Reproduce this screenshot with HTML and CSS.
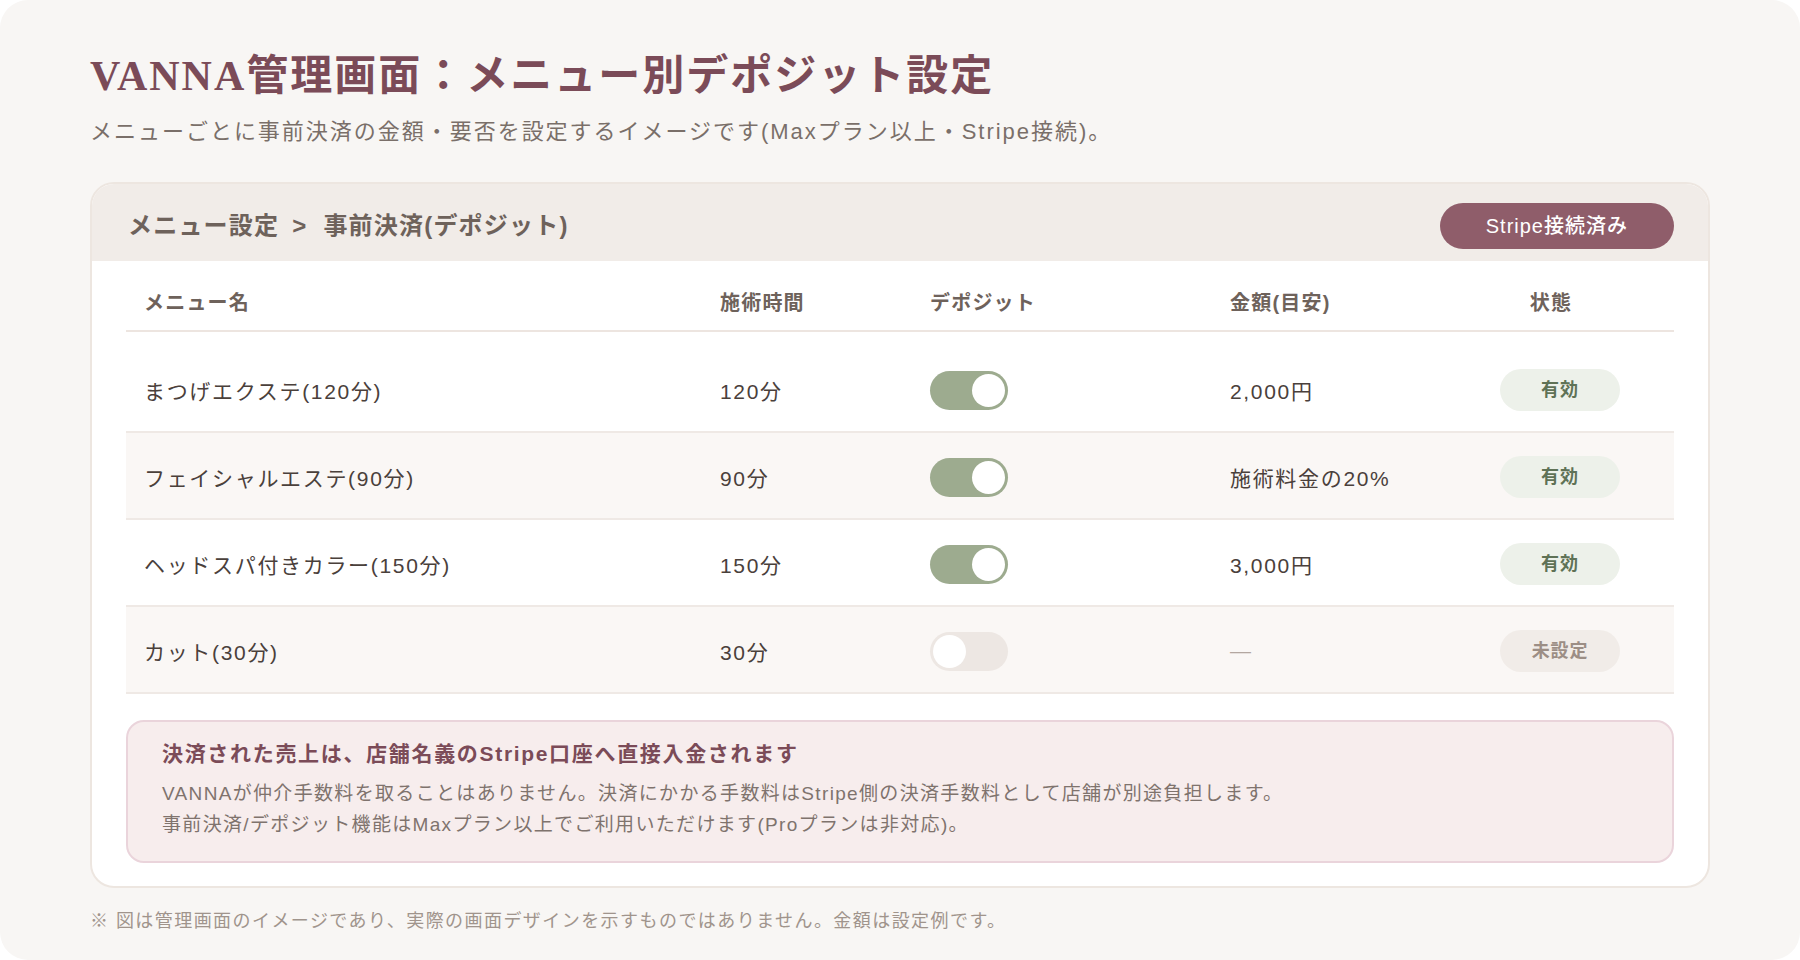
FILE: index.html
```html
<!DOCTYPE html>
<html lang="ja">
<head>
<meta charset="utf-8">
<title>VANNA管理画面：メニュー別デポジット設定</title>
<link rel="stylesheet" href="styles.css">
</head>
<body>
<div class="page">
  <h1 class="title">VANNA管理画面：メニュー別デポジット設定</h1>
  <p class="lead">メニューごとに事前決済の金額・要否を設定するイメージです(Maxプラン以上・Stripe接続)。</p>

  <div class="card">
    <div class="card-head">
      <div class="crumb">メニュー設定<span class="sep">&gt;</span>事前決済(デポジット)</div>
      <span class="badge">Stripe接続済み</span>
    </div>

    <div class="table">
      <div class="row head">
        <div class="cell">メニュー名</div>
        <div class="cell">施術時間</div>
        <div class="cell">デポジット</div>
        <div class="cell">金額(目安)</div>
        <div class="cell status">状態</div>
      </div>
      <div class="rows">
        <div class="row">
          <div class="cell">まつげエクステ(120分)</div>
          <div class="cell">120分</div>
          <div class="cell"><span class="toggle on"><i></i></span></div>
          <div class="cell">2,000円</div>
          <div class="cell status"><span class="pill ok">有効</span></div>
        </div>
        <div class="row alt">
          <div class="cell">フェイシャルエステ(90分)</div>
          <div class="cell">90分</div>
          <div class="cell"><span class="toggle on"><i></i></span></div>
          <div class="cell">施術料金の20%</div>
          <div class="cell status"><span class="pill ok">有効</span></div>
        </div>
        <div class="row">
          <div class="cell">ヘッドスパ付きカラー(150分)</div>
          <div class="cell">150分</div>
          <div class="cell"><span class="toggle on"><i></i></span></div>
          <div class="cell">3,000円</div>
          <div class="cell status"><span class="pill ok">有効</span></div>
        </div>
        <div class="row alt">
          <div class="cell">カット(30分)</div>
          <div class="cell">30分</div>
          <div class="cell"><span class="toggle"><i></i></span></div>
          <div class="cell dash">—</div>
          <div class="cell status"><span class="pill off">未設定</span></div>
        </div>
      </div>
    </div>

    <div class="note">
      <div class="note-title">決済された売上は、店舗名義のStripe口座へ直接入金されます</div>
      <p>VANNAが仲介手数料を取ることはありません。決済にかかる手数料はStripe側の決済手数料として店舗が別途負担します。</p>
      <p>事前決済/デポジット機能はMaxプラン以上でご利用いただけます(Proプランは非対応)。</p>
    </div>
  </div>

  <p class="foot">※ 図は管理画面のイメージであり、実際の画面デザインを示すものではありません。金額は設定例です。</p>
</div>
</body>
</html>
```

FILE: styles.css
```css
*{margin:0;padding:0;box-sizing:border-box;}
body{background:#fff;font-family:"Liberation Sans","Noto Sans CJK JP",sans-serif;color:#4a403b;}
.page{width:1800px;height:960px;background:#f8f6f4;border-radius:28px;padding:50px 90px 0;}

.title{font-family:"Liberation Serif","Noto Sans CJK JP",serif;font-size:42px;line-height:52px;font-weight:700;color:#7b4b58;letter-spacing:2px;}
.lead{margin-top:15px;font-size:22px;line-height:30px;color:#7a6f69;letter-spacing:0.09em;}

.card{margin-top:35px;background:#fff;border:2px solid #ede6e0;border-radius:24px;overflow:hidden;padding-bottom:23px;}
.card-head{display:flex;justify-content:space-between;align-items:center;background:#f1ece8;padding:19px 34px 12px 36px;}
.crumb{font-size:24px;line-height:32px;font-weight:700;color:#6e625b;letter-spacing:0.05em;}
.crumb .sep{margin:0 16px 0 13px;}
.badge{display:inline-block;height:46px;line-height:46px;padding:0 46px;border-radius:23px;background:#8f5d6a;color:#fff;font-size:20px;font-weight:500;letter-spacing:0.05em;}

.table{margin:0 34px;padding-top:13px;}
.row{display:grid;grid-template-columns:576px 210px 300px 228px 1fr;align-items:center;border-bottom:2px solid #efe9e5;height:87px;padding-top:3px;font-size:21px;letter-spacing:0.08em;}
.row.head{height:58px;padding:0 0 2px;font-size:20px;font-weight:700;color:#6e625b;letter-spacing:0.06em;border-bottom-color:#ede5e0;}
.row.head .status{padding:0 12px 0 0;}
.rows{margin-top:14px;}
.row.alt{background:#faf7f5;}
.cell{padding-left:18px;}
.cell.status{padding-left:6px;text-align:center;}
.cell.dash{color:#b3a7a0;}

.toggle{display:block;width:78px;height:39px;border-radius:20px;background:#ede7e3;padding:3px;}
.toggle i{display:block;width:33px;height:33px;border-radius:50%;background:#fff;}
.toggle.on{background:#9dab8f;}
.toggle.on i{margin-left:39px;}

.pill{display:inline-block;width:120px;height:42px;line-height:42px;border-radius:21px;font-size:18px;font-weight:700;letter-spacing:0.05em;}
.pill.ok{background:#edf1ea;color:#5f7256;}
.pill.off{background:#f1ece8;color:#9c8e85;}

.note{margin:26px 34px 0;background:#f7eded;border:2px solid #ead4db;border-radius:18px;padding:17px 34px 21px;}
.note-title{font-size:21px;line-height:30px;font-weight:700;color:#7b4b58;letter-spacing:0.08em;}
.note p{font-size:19px;line-height:31px;color:#7f736d;letter-spacing:0.07em;}
.note-title + p{margin-top:9px;}

.foot{margin-top:20px;font-size:18px;line-height:26px;color:#a0948c;letter-spacing:0.08em;}
```
